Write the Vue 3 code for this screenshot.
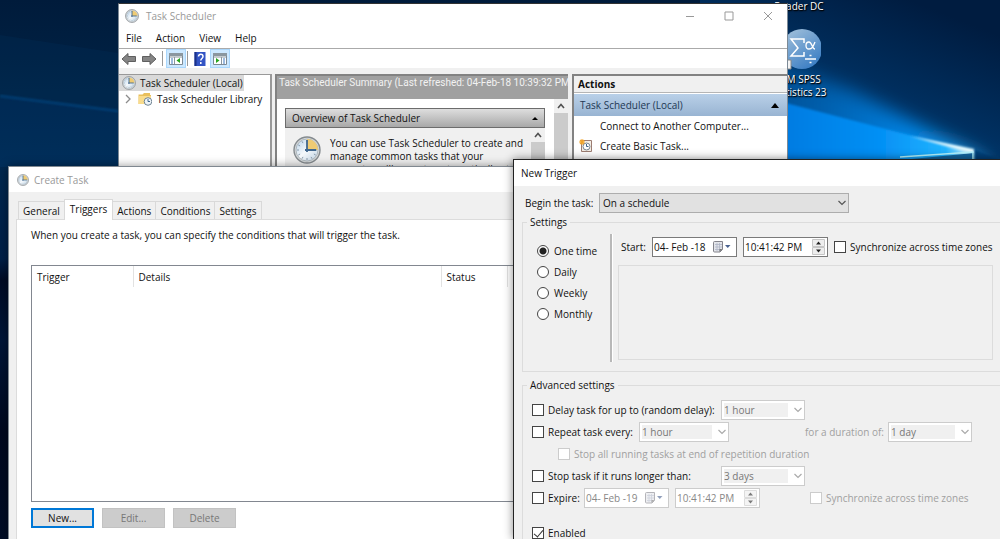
<script setup>
import { ref } from 'vue'

const menus = ['File', 'Action', 'View', 'Help']
const tabs = ['General', 'Triggers', 'Actions', 'Conditions', 'Settings']
const activeTab = ref('Triggers')
const frequencies = ['One time', 'Daily', 'Weekly', 'Monthly']
const frequency = ref('One time')
const startDate = ref('04- Feb -18')
const startTime = ref('10:41:42 PM')
const expireDate = ref('04- Feb -19')
const expireTime = ref('10:41:42 PM')
const enabled = ref(true)
</script>

<template>
  <div class="desktop">
    <svg class="defs" width="0" height="0" aria-hidden="true">
      <defs>
        <linearGradient id="face" x1="0" y1="0" x2="1" y2="1">
          <stop offset="0" stop-color="#b9d3ea" />
          <stop offset="0.5" stop-color="#f4f8fb" />
          <stop offset="1" stop-color="#bfd3e4" />
        </linearGradient>
      </defs>
      <symbol id="clock" viewBox="0 0 28 28">
        <circle cx="14" cy="14" r="13" fill="#d5d8da" stroke="#858b8f" stroke-width="1.4" />
        <circle cx="14" cy="14" r="11" fill="url(#face)" stroke="#a5adb3" stroke-width="0.8" />
        <path d="M14 14V3a11 11 0 0 1 11 11z" fill="#efcb74" />
        <path d="M14 4v2M14 22v2M4 14h2M22 14h2M9 5.3l1 1.8M19 22.700l-1-1.800M5.300 9l1.800 1M5.300 19l1.800-1M9 22.700l1-1.800M22.700 19l-1.800-1" stroke="#7f93a5" stroke-width="0.9" />
        <path d="M14 4v12M12 14h11" stroke="#40688f" stroke-width="1.8" fill="none" />
      </symbol>
      <symbol id="chevron" viewBox="0 0 10 10">
        <path d="M1.500 3l3.500 3.500L8.500 3" fill="none" stroke="currentColor" stroke-width="1.200" />
      </symbol>
      <symbol id="calendar" viewBox="0 0 18 12">
        <path d="M1.500 .5h8v8l-2.500 2.500H1.500a1 1 0 0 1-1-1v-8.500a1 1 0 0 1 1-1z" fill="#e3e5ea" stroke="#83838b" />
        <path d="M2 3.500h7M2 6h7M2 8.500h5M4 2v8M6.500 2v8" stroke="#aeb5c6" stroke-width="0.800" />
        <path d="M9.500 8l-3 3v-3z" fill="#777" />
        <path d="M12 4h5.500l-2.750 3z" fill="#49618f" />
      </symbol>
      <symbol id="spin" viewBox="0 0 13 16">
        <path d="M.5 .5h12v7H.5zM.5 8.500h12v7H.5z" fill="#ededed" stroke="#c6c6c6" />
        <path d="M4 5.500l2.500-3 2.500 3zM4 10.500h5l-2.500 3z" fill="currentColor" />
      </symbol>
      <symbol id="up" viewBox="0 0 14 14">
        <path d="M4 9l3-3.500L10 9" fill="none" stroke="#505050" stroke-width="1.600" />
      </symbol>
    </svg>

    <svg class="wallpaper" viewBox="0 0 1000 539" preserveAspectRatio="none" aria-hidden="true">
      <defs>
        <linearGradient id="left" x1="0" y1="0" x2="0" y2="1">
          <stop offset="0" stop-color="#001b3b" />
          <stop offset="0.17" stop-color="#002346" />
          <stop offset="0.3" stop-color="#00284f" />
          <stop offset="0.48" stop-color="#001f47" />
          <stop offset="0.52" stop-color="#000b24" />
          <stop offset="0.63" stop-color="#001638" />
          <stop offset="0.8" stop-color="#00081e" />
          <stop offset="1" stop-color="#000d26" />
        </linearGradient>
        <linearGradient id="sky" x1="0" y1="1" x2="0.700" y2="0">
          <stop offset="0" stop-color="#005ba8" />
          <stop offset="0.5" stop-color="#003467" />
          <stop offset="1" stop-color="#001c40" />
        </linearGradient>
        <linearGradient id="beam" x1="0" y1="0" x2="1" y2="0">
          <stop offset="0" stop-color="#0572d8" />
          <stop offset="0.600" stop-color="#0490f5" />
          <stop offset="0.880" stop-color="#22b4ff" />
          <stop offset="1" stop-color="#e0fbff" />
        </linearGradient>
        <linearGradient id="glow" x1="0" y1="0" x2="1" y2="0">
          <stop offset="0" stop-color="#0067bd" stop-opacity="0.300" />
          <stop offset="0.650" stop-color="#008cf2" stop-opacity="0.900" />
          <stop offset="1" stop-color="#43c0ff" />
        </linearGradient>
        <filter id="soft" x="-30%" y="-50%" width="160%" height="200%"><feGaussianBlur stdDeviation="9" /></filter>
        <filter id="edge"><feGaussianBlur stdDeviation="1" /></filter>
      </defs>
      <rect width="1000" height="539" fill="url(#left)" />
      <path d="M0 35L118 53V167H0z" fill="#003766" opacity="0.200" />
      <path d="M0 97L118 111V167H0z" fill="#003f7a" opacity="0.180" />
      <path d="M0 96L118 111" stroke="#06427c" stroke-width="2" filter="url(#edge)" />
      <rect x="700" width="300" height="170" fill="url(#sky)" />
      <path d="M740 50L850 90 974 153 1000 175H740z" fill="url(#glow)" filter="url(#soft)" />
      <path d="M740 91L974 152V180H740z" fill="url(#beam)" filter="url(#edge)" />
      <path d="M910 136l64 13v5z" fill="#e7fbff" filter="url(#edge)" />
      <path d="M870 163l104-10v10z" fill="#12649e" />
      <path d="M900 157l73-5v12" fill="none" stroke="#b4f4ff" stroke-width="1.500" />
      <path d="M975 150l25 9v11h-25z" fill="#003f79" filter="url(#edge)" />
    </svg>

    <div class="shortcut">
      <span class="caption">Reader DC</span>
      <svg class="spss" viewBox="0 0 44 42" aria-hidden="true">
        <defs>
          <linearGradient id="ball" x1="0" y1="0" x2="0.700" y2="1">
            <stop offset="0" stop-color="#a9c5dc" />
            <stop offset="1" stop-color="#3b7ec4" />
          </linearGradient>
        </defs>
        <circle cx="25" cy="21" r="20" fill="url(#ball)" />
        <path d="M27 15V11H14l7 9-7 8h13v-4M14 11l7 9M14 28h13" fill="none" stroke="#fff" stroke-width="1.500" />
        <path d="M38 14c-2 5-3 7-6 7-4 0-4-7 0-7 3 0 3 7 6 7" fill="none" stroke="#fff" stroke-width="1.300" />
        <path d="M28 31h11M32.500 27.500h2M32.500 34.500h2" stroke="#fff" stroke-width="1.400" />
        <path d="M3 32h11v9H3z" fill="#f3f3f3" stroke="#888" /><path d="M6 39v-4h5" stroke="#1d5a9e" fill="none" stroke-width="2" />
      </svg>
      <span class="caption">IBM SPSS</span>
      <span class="caption">Statistics 23</span>
    </div>

    <section class="window scheduler">
      <header class="titlebar">
        <svg class="i14"><use href="#clock" /></svg>
        <span class="title">Task Scheduler</span>
        <div class="controls">
          <button type="button" aria-label="Minimize"><svg viewBox="0 0 10 10"><path d="M1 5.500h8" /></svg></button>
          <button type="button" aria-label="Maximize"><svg viewBox="0 0 10 10"><path d="M1 1h8v8H1z" /></svg></button>
          <button type="button" aria-label="Close"><svg viewBox="0 0 10 10"><path d="M1 1l8 8M9 1L1 9" /></svg></button>
        </div>
      </header>
      <nav class="menubar">
        <button v-for="m in menus" :key="m" type="button">{{ m }}</button>
      </nav>
      <div class="toolbar">
        <button type="button" aria-label="Back"><svg viewBox="0 0 16 14"><path d="M1 7l6-5.500V4.500h7.500v5H7v3z" fill="#858585" stroke="#5f5f5f" /></svg></button>
        <button type="button" aria-label="Forward"><svg viewBox="0 0 16 14"><path d="M15 7L9 1.500V4.500H1.500v5H9v3z" fill="#858585" stroke="#5f5f5f" /></svg></button>
        <i class="sep"></i>
        <button type="button" class="on" aria-label="Show console tree"><svg viewBox="0 0 16 14"><path d="M1.500 1.500h13v11h-13z" fill="#fff" stroke="#7d8a94" /><path d="M1 1h14v3H1z" fill="#8b979f" /><path d="M2 5h12M6.500 5v7" stroke="#8b979f" /><path d="M3 7h2M3 9h2M3 11h2" stroke="#3d77bd" /><path d="M12 6v5L8.500 8.500z" fill="#27a51e" /></svg></button>
        <i class="sep near"></i>
        <button type="button" aria-label="Help"><svg viewBox="0 0 16 14"><path d="M2.500 0h11v14h-11z" fill="#3354c4" /><path d="M2.500 0h2v14h-2z" fill="#1b3187" /><path d="M6.500 4.500c0-3 4.500-2.800 4.500 0 0 2-2.200 2-2.200 4M8.800 10v2" fill="none" stroke="#fff" stroke-width="1.500" /></svg></button>
        <button type="button" class="on" aria-label="Show action pane"><svg viewBox="0 0 16 14"><path d="M1.500 1.500h13v11h-13z" fill="#fff" stroke="#7d8a94" /><path d="M1 1h14v3H1z" fill="#8b979f" /><path d="M2 5h12M9.500 5v7" stroke="#8b979f" /><path d="M11 7h2M11 9h2M11 11h2" stroke="#3d77bd" /><path d="M4 6v5l3.500-2.500z" fill="#27a51e" /></svg></button>
      </div>
      <div class="panes">
        <ul class="tree">
          <li class="root"><svg class="i14"><use href="#clock" /></svg><span>Task Scheduler (Local)</span></li>
          <li class="leaf">
            <svg class="twisty" viewBox="0 0 10 10"><path d="M3 1l4 4-4 4" fill="none" stroke="#8c8c8c" stroke-width="1.300" /></svg>
            <svg class="folder" viewBox="0 0 14 14"><path d="M.5 12V2.500h4L6 1h6v2h1v9z" fill="#e9bf5c" /><path d="M.5 12L1 4h12v8z" fill="#f9dc8d" /><circle cx="10" cy="9.500" r="3.800" fill="#edf4f9" stroke="#718594" /><path d="M10 7v2.500h2" fill="none" stroke="#40688f" /></svg>
            <span>Task Scheduler Library</span>
          </li>
        </ul>
        <div class="summary">
          <div class="summary-head">Task Scheduler Summary (Last refreshed: 04-Feb-18 10:39:32 PM)</div>
          <div class="summary-body">
            <div class="overview">
              <div class="overview-head">Overview of Task Scheduler<i class="tri small"></i></div>
              <div class="overview-body">
                <svg class="i28"><use href="#clock" /></svg>
                <p>You can use Task Scheduler to create and<br>manage common tasks that your<br>computer will execute automatically at</p>
                <div class="scroll"><svg><use href="#up" /></svg></div>
              </div>
            </div>
            <div class="scroll"><svg><use href="#up" /></svg></div>
          </div>
        </div>
        <aside class="actions">
          <h2>Actions</h2>
          <div class="actions-group">Task Scheduler (Local)<i class="tri"></i></div>
          <a href="#"><i class="blank"></i>Connect to Another Computer...</a>
          <a href="#">
            <svg class="i14" viewBox="0 0 14 14"><path d="M2.500 1.500h10v11h-10z" fill="#f5efe6" stroke="#9c7d72" /><circle cx="7.500" cy="7.500" r="3.500" fill="#fff" stroke="#788793" /><path d="M7.500 5v2.500h2" fill="none" stroke="#3f6389" /><path d="M3 0v6M0 3h6M1 1l4 4M5 1L1 5" stroke="#f2a52c" stroke-width="1.100" /></svg>
            Create Basic Task...
          </a>
        </aside>
      </div>
    </section>

    <section class="window task">
      <header class="titlebar">
        <svg class="i12"><use href="#clock" /></svg>
        <span class="title">Create Task</span>
      </header>
      <div class="tabs" role="tablist">
        <button v-for="t in tabs" :key="t" type="button" role="tab" :aria-selected="t === activeTab" :class="{ active: t === activeTab }" @click="activeTab = t">{{ t }}</button>
      </div>
      <div class="tabpanel">
        <p>When you create a task, you can specify the conditions that will trigger the task.</p>
        <div class="list">
          <table>
            <thead>
              <tr><th class="c1">Trigger</th><th class="c2">Details</th><th class="c3">Status</th><th></th></tr>
            </thead>
          </table>
        </div>
        <div class="buttons">
          <button type="button" class="default">New...</button>
          <button type="button" disabled>Edit...</button>
          <button type="button" disabled>Delete</button>
        </div>
      </div>
    </section>

    <section class="window trigger">
      <header class="titlebar"><span class="title">New Trigger</span></header>
      <div class="begin">
        <label for="begin">Begin the task:</label>
        <span class="combo wide"><select id="begin"><option>On a schedule</option></select><svg><use href="#chevron" /></svg></span>
      </div>

      <fieldset class="settings">
        <legend>Settings</legend>
        <div class="frequency">
          <label v-for="f in frequencies" :key="f"><input v-model="frequency" type="radio" name="frequency" :value="f">{{ f }}</label>
        </div>
        <div class="schedule">
          <div class="start">
            <label for="start-date">Start:</label>
            <span class="field"><input id="start-date" v-model="startDate" type="text"><svg class="cal"><use href="#calendar" /></svg></span>
            <span class="field"><input v-model="startTime" type="text" aria-label="Start time"><svg class="spin"><use href="#spin" /></svg></span>
            <label class="check"><input type="checkbox">Synchronize across time zones</label>
          </div>
          <div class="detail"></div>
        </div>
      </fieldset>

      <fieldset class="advanced">
        <legend>Advanced settings</legend>
        <div class="row">
          <label class="check lead"><input type="checkbox">Delay task for up to (random delay):</label>
          <span class="combo off"><select disabled aria-label="Delay"><option>1 hour</option></select><svg><use href="#chevron" /></svg></span>
        </div>
        <div class="row">
          <label class="check repeat"><input type="checkbox">Repeat task every:</label>
          <span class="combo off every"><select disabled aria-label="Repeat interval"><option>1 hour</option></select><svg><use href="#chevron" /></svg></span>
          <label class="dim duration" for="duration">for a duration of:</label>
          <span class="combo off"><select id="duration" disabled><option>1 day</option></select><svg><use href="#chevron" /></svg></span>
        </div>
        <div class="row sub">
          <label class="check dim"><input type="checkbox" disabled>Stop all running tasks at end of repetition duration</label>
        </div>
        <div class="row">
          <label class="check lead"><input type="checkbox">Stop task if it runs longer than:</label>
          <span class="combo off"><select disabled aria-label="Maximum run time"><option>3 days</option></select><svg><use href="#chevron" /></svg></span>
        </div>
        <div class="row">
          <label class="check expire"><input type="checkbox">Expire:</label>
          <span class="field off"><input v-model="expireDate" type="text" disabled aria-label="Expire date"><svg class="cal"><use href="#calendar" /></svg></span>
          <span class="field off"><input v-model="expireTime" type="text" disabled aria-label="Expire time"><svg class="spin"><use href="#spin" /></svg></span>
          <label class="check dim sync"><input type="checkbox" disabled>Synchronize across time zones</label>
        </div>
        <div class="row last">
          <label class="check"><input v-model="enabled" type="checkbox">Enabled</label>
        </div>
      </fieldset>
    </section>
  </div>
</template>

<style>
body { margin: 0; overflow: hidden; }
</style>

<style scoped>
* { box-sizing: border-box; }
.desktop { position: relative; height: 100vh; overflow: hidden; font: 10px/14px "Open Sans", "Noto Sans", sans-serif; color: #111; }
.defs { position: absolute; }
.wallpaper { display: block; width: 100%; height: 100%; }
button, input, select { font: inherit; color: inherit; margin: 0; padding: 0; border: 0; background: none; }
svg { flex: none; }
p, h2, ul { margin: 0; padding: 0; }
.i12 { width: 12px; height: 12px; }
.i14 { width: 14px; height: 14px; }
.i28 { width: 28px; height: 28px; }

.shortcut { position: absolute; top: 0; right: 165px; width: 72px; display: flex; flex-direction: column; align-items: center; color: #fff; text-shadow: 0 1px 2px #000, 1px 1px 1px #000; white-space: nowrap; }
.shortcut .caption { line-height: 13px; }
.spss { width: 44px; height: 42px; margin: 15px 0 3px; }

.window { position: absolute; display: flex; flex-direction: column; white-space: nowrap; }
.titlebar { display: flex; align-items: center; background: #fff; color: #999; flex: none; }

.scheduler { left: 118px; right: 212px; top: 3px; height: 190px; background: #f0f0f0; border: 1px solid #7d8a96; border-top-color: #333; }
.scheduler .titlebar { height: 24px; padding-left: 6px; gap: 7px; }
.controls { margin-left: auto; display: flex; }
.controls button { width: 39px; height: 24px; display: grid; place-items: center; }
.controls svg { width: 10px; height: 10px; stroke: #999; fill: none; }
.menubar { display: flex; gap: 14px; padding: 0 7px; height: 21px; background: #fff; border-bottom: 1px solid #aaa; align-items: center; flex: none; }
.toolbar { display: flex; align-items: center; height: 19px; background: #fff; flex: none; }
.toolbar button { width: 20px; height: 19px; display: grid; place-items: center; border: 1px solid transparent; }
.toolbar button.on { background: #cce8ff; border-color: #a9d6fb; }
.toolbar svg { width: 16px; height: 14px; }
.sep { width: 1px; height: 15px; background: #999; margin: 0 3px; }
.sep.near { margin: 0 2px 0 1px; }
.panes { display: flex; flex: 1; margin-top: 6px; min-height: 0; }
.tree { width: 153px; background: #fff; border: solid #999; border-width: 1px 2px 0 0; list-style: none; flex: none; }
.tree li { display: flex; align-items: center; height: 16px; }
.tree .root { width: 125px; background: #d9d9d9; padding-left: 3px; gap: 4px; }
.tree .leaf { padding-left: 4px; gap: 5px; }
.twisty { width: 10px; height: 10px; }
.folder { width: 14px; height: 14px; }
.summary { flex: 1; min-width: 0; margin: 0 4px 0 3px; border: solid #828282; border-width: 2px 0 0 2px; background: #fff; display: flex; flex-direction: column; }
.summary-head { height: 23px; background: #a0a0a0; color: #f2f2f2; padding-left: 2px; font-family: Roboto, "Open Sans", sans-serif; overflow: hidden; flex: none; }
.summary-body { display: flex; flex: 1; justify-content: space-between; min-height: 0; }
.overview { flex: 1; margin: 9px 9px 0 8px; display: flex; flex-direction: column; min-width: 0; }
.overview-head { display: flex; justify-content: space-between; align-items: center; height: 20px; padding: 0 6px; border: 1px solid #6c6c6c; background: linear-gradient(#dedede, #a8a8a8); flex: none; }
.overview-body { display: flex; background: #f0f0f0; padding-left: 8px; gap: 9px; flex: 1; overflow: hidden; }
.overview-body .i28 { margin-top: 8px; }
.overview-body p { flex: 1; min-width: 0; padding-top: 9px; line-height: 13px; }
.scroll { width: 14px; background: linear-gradient(#f0f0f0 14px, #cbcbcb 14px); flex: none; }
.scroll svg { display: block; width: 14px; height: 14px; }
.tri { width: 0; height: 0; border: 4px solid transparent; border-top: 0; border-bottom: 5px solid #000; }
.tri.small { border-width: 0 3px 3px; }
.actions { width: 215px; background: #fff; border: solid #828282; border-width: 2px 0 0 2px; flex: none; }
.actions h2 { height: 17px; padding: 1px 4px 0; background: #f0f0f0; border-bottom: 1px solid #b5b5b5; font-size: 10px; line-height: 14px; font-weight: 700; }
.actions-group { display: flex; justify-content: space-between; align-items: center; height: 22px; margin-top: 1px; padding: 0 8px 0 6px; background: linear-gradient(#b9d0e8, #98b4d2); color: #1e3854; }
.actions a { display: flex; align-items: center; gap: 7px; height: 20px; padding-left: 5px; color: #111; text-decoration: none; }
.blank { width: 14px; }

.task { left: 8px; right: 0; top: 166px; bottom: 0; background: #f0f0f0; border: solid #808890; border-width: 1px 0 0 1px; box-shadow: 0 0 9px #0006; }
.task .titlebar { height: 25px; padding-left: 8px; gap: 5px; }
.tabs { display: flex; align-items: flex-end; padding: 7px 0 0 9px; height: 27px; flex: none; }
.tabs button { height: 18px; padding: 0 4px; border: 1px solid #d9d9d9; border-bottom: 0; margin-right: -1px; }
.tabs .active { height: 21px; margin-bottom: -1px; padding: 0 5px 2px; background: #fff; position: relative; }
.tabpanel { display: flex; flex-direction: column; flex: 1; min-height: 0; margin-left: 7px; padding: 8px 0 11px 14px; background: #fff; border: solid #dcdcdc; border-width: 1px 0 0 1px; }
.list { flex: 1; margin-top: 23px; border: 1px solid #828790; }
.list table { width: 100%; table-layout: fixed; border-collapse: collapse; }
.list th { height: 21px; padding: 0 5px; text-align: left; font-weight: 400; border-right: 1px solid #e2e2e2; }
.c1 { width: 101px; }
.c2 { width: 308px; }
.c3 { width: 66px; }
.buttons { display: flex; gap: 8px; margin-top: 6px; flex: none; }
.buttons button { width: 63px; height: 20px; background: #ccc; color: #777; border: 1px solid #c2c2c2; }
.buttons .default { background: #e1e1e1; color: #111; border: 2px solid #0078d7; }

.trigger { left: 513px; right: 0; top: 159px; bottom: 0; background: #f0f0f0; border: solid #222; border-width: 1px 0 0 1px; box-shadow: 0 0 9px #0007; overflow: hidden; }
.trigger .titlebar { height: 26px; padding-left: 7px; color: #111; }
.begin { display: flex; align-items: center; gap: 8px; padding: 7px 11px 0; flex: none; }
.begin label { width: 66px; }
.combo { position: relative; display: block; width: 84px; height: 20px; flex: none; }
.combo select { width: 100%; height: 100%; padding: 0 18px 0 3px; border: 1px solid #adadad; background: #e1e1e1; appearance: none; border-radius: 0; opacity: 1; }
.combo svg { position: absolute; right: 2px; top: 5px; width: 10px; height: 10px; color: #555; pointer-events: none; }
.combo.wide { width: 250px; }
.combo.off select { padding-left: 2px; border-color: #ccc; color: #777; background: linear-gradient(#f0f0f0, #f0f0f0) 2px 2px / calc(100% - 18px) calc(100% - 4px) no-repeat #fff; }
.combo.off svg { color: #aaa; }
.combo.every { width: 90px; }
fieldset { margin: 0 0 0 8px; padding: 0; border: 1px solid #dcdcdc; border-right: 0; min-width: 0; }
legend { margin-left: 4px; padding: 0 3px; line-height: 14px; }
.settings { display: flex; margin-top: 2px; padding-bottom: 9px; flex: none; }
.frequency { width: 89px; padding: 6px 0 0 14px; height: 128px; margin-top: 5px; border-right: 2px solid #b9b9b9; box-shadow: 1px 0 #fff; flex: none; }
.frequency label { display: flex; align-items: center; gap: 5px; height: 21px; }
input[type="radio"], input[type="checkbox"] { appearance: none; width: 12px; height: 12px; border: 1px solid #444; background: #fff; flex: none; }
input[type="radio"] { border-radius: 50%; }
input[type="radio"]:checked { background: radial-gradient(circle, #222 3px, #fff 4px); }
input[type="checkbox"]:disabled { border-color: #ccc; }
input[type="checkbox"]:checked { position: relative; }
input[type="checkbox"]:checked::after { content: ""; position: absolute; left: 3px; top: 0; width: 4px; height: 8px; border: solid #333; border-width: 0 1px 1px 0; transform: rotate(40deg); }
.schedule { flex: 1; min-width: 0; padding: 8px 7px 0 6px; }
.start { display: flex; align-items: center; gap: 6px; padding-left: 3px; }
.start > label:first-child { width: 25px; }
.field { display: flex; align-items: center; width: 85px; height: 20px; padding: 0 2px 0 1px; border: 1px solid #7a7a7a; background: #fff; flex: none; }
.field input { flex: 1; min-width: 0; height: 18px; }
.cal { width: 18px; height: 12px; margin-right: 3px; }
.spin { width: 13px; height: 16px; color: #222; }
.field.off { border-color: #ccc; color: #888; }
.field.off svg { opacity: 0.6; }
.check { display: flex; align-items: center; gap: 4px; }
.detail { height: 95px; margin-top: 8px; border: 1px solid #dcdcdc; }
.advanced { margin-top: 6px; padding-left: 9px; height: 190px; flex: none; }
.advanced legend { margin-left: -5px; }
.row { display: flex; align-items: center; height: 22px; }
.advanced legend + .row { margin-top: 7px; }
.lead { width: 189px; }
.repeat { width: 107px; }
.duration { width: 83px; margin-left: 76px; }
.dim { color: #a0a0a0; }
.sub { padding-left: 26px; }
.expire { width: 52px; }
.field.off + .field.off { margin-left: 6px; }
.sync { margin-left: 50px; }
.last { margin-top: 13px; }
</style>
